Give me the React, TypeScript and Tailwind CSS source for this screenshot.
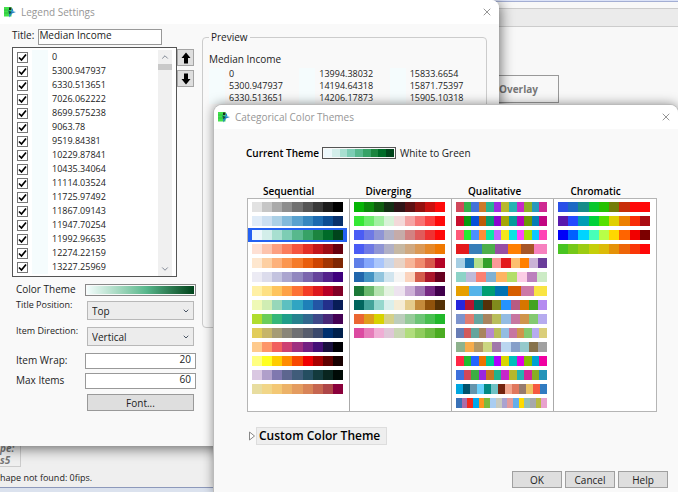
import { useState } from 'react';
import type { ReactNode } from 'react';
import { ChevronDown, ChevronUp, X } from 'lucide-react';

const legendItems = [
  '0', '5300.947937', '6330.513651', '7026.062222', '8699.575238', '9063.78',
  '9519.84381', '10229.87841', '10435.34064', '11114.03524', '11725.97492',
  '11867.09143', '11947.70254', '11992.96635', '12274.22159', '13227.25969',
];

const previewColumns = [
  ['0', '5300.947937', '6330.513651'],
  ['13994.38032', '14194.64318', '14206.17873'],
  ['15833.6654', '15871.75397', '15905.10318'],
];

const whiteToGreen = '#edf8fb #d3eeea #a8dfd0 #7dcdb4 #58b88d #37a266 #1c853f #006b28 #00441b';

const themeGroups = [
  {
    name: 'Sequential',
    themes: [
      '#e2e2e2 #c6c6c6 #aaaaaa #8e8e8e #717171 #555555 #393939 #1c1c1c #000000',
      '#e0ecf8 #cbdff1 #abd0e6 #82badb #59a1cf #3787c0 #1c6ab0 #0b4d94 #08306b',
      whiteToGreen,
      '#fee0d4 #fdc3ac #fc9f81 #fb7c5c #f5543f #e32f27 #c3161b #9e0d14 #67000d',
      '#fee7cf #fdcfa2 #fdb17b #fb9650 #f57b2a #e95e0d #cd4401 #a23503 #7f2704',
      '#ecebf4 #dcdcec #c3c3df #aaa5cf #9187bf #7b66ae #65439b #53218b #3f007d',
      '#fff0a5 #fee083 #fec45c #fea145 #fd7134 #f43c25 #dd181d #b60026 #800026',
      '#eff9b6 #d0edb3 #97d7b9 #5dc0c0 #30a5c2 #1e80b8 #2356a5 #232f8b #081d58',
      '#b0dd2f #6bcd5a #35b779 #1f9e89 #26828e #31688e #3e4989 #482878 #440154',
      '#e2cd5a #c6b569 #a69c75 #8a8678 #6f7073 #575d6d #3b496c #00306f #00204c',
      '#feca8d #fd9668 #f1605d #cd4071 #9e2f7f #721f81 #440f76 #180f3d #000004',
      '#ffff80 #ffff20 #ffcc00 #ff8c00 #f84800 #f00000 #a80000 #600000 #180000',
      '#dac8e2 #b09fca #8078af #5d668f #405c7a #254e61 #133a3d #09251f #000a05',
      '#e8dda0 #f1d688 #f3c875 #ecb268 #e49c60 #d88458 #c66650 #ae4648 #8a003b',
    ],
  },
  {
    name: 'Diverging',
    themes: [
      '#05b505 #0b8a0b #105c10 #152f15 #2f1518 #5e1013 #94100f #cb100f #ff0a0a',
      '#35e835 #6cec6c #a2f0a2 #d8f2d8 #f3d9d9 #f5a4a4 #f87272 #fc3f3f #ff0a0a',
      '#4a5cf5 #6e79e5 #8f95d5 #b0b0c6 #c5aba9 #d28282 #e05b5b #ef3131 #ff0808',
      '#4a5cf5 #6e79e5 #8f95d5 #b0b0c6 #c6b8a3 #d0a981 #db9956 #e58829 #f07800',
      '#5f7fe8 #84a6fb #aac6fb #ccd7e8 #e8d3c6 #f6b599 #ef8b6e #d8584a #b40426',
      '#2166ac #4493c3 #92c5de #d1e5ef #f6f5f4 #fbd3bd #d45c4b #ab162a #67001f',
      '#1b7837 #69b76b #b5e2af #e4f2e0 #ede3ef #cdb1d7 #a278b4 #762a83 #40004b',
      '#01665e #43a399 #96d7cd #daefec #f5ecd5 #e5cb8c #c48a3b #90520c #543005',
      '#eb6632 #e09c1c #d8d200 #d4d08a #bccdbc #96cb99 #6dc576 #48bf50 #20b82a',
      '#dc4aa1 #e67cba #f0aed5 #dfc7d8 #c9d7b4 #b1dd7d #90cc5e #6ebc43 #4bac22',
    ],
  },
  {
    name: 'Qualitative',
    themes: [
      '#d1495b #35b04a #4472d8 #cc7a29 #27b391 #9b2be0 #b8b82b #28b3b3 #c72ac7 #8eb127 #2899bd #cf2a92',
      '#c8102e #089b10 #0850d8 #bd5b08 #069b6e #8a06cf #a5a506 #069b9b #b506b5 #6c9806 #067eb5 #c10681',
      '#ff5978 #26ec30 #4b90ff #ff8e35 #0be8a5 #bd68ff #f4e71c #0be4e4 #fd47fb #a3e00b #0bc8ff #ff43b5',
      '#e41a1c #377eb8 #4daf4a #984ea3 #ff7f00 #a65628 #f781bf',
      '#a6cee3 #1f78b4 #b2df8a #33a02c #fb9a99 #e31a1c #fdbf6f #ff7f00 #cab2d6 #6a3d9a',
      '#8dd3c7 #bebada #fb8072 #80b1d3 #fdb462 #b3de69 #fccde5 #bc80bd #ccebc5',
      '#e69f00 #56b4e9 #009e73 #0072b2 #d55e00 #cc79a7 #f9e442',
      '#2626dc #b5132f #00665e #563009 #808b1c #2593ff #b75b83 #d67600 #44a321 #b58bf0',
      '#7c93cd #e07c70 #65a6a1 #a8845e #b9bd5b #93bce2 #c776a0 #cf954b #84c970 #b6abef',
      '#697db5 #d35a5b #64a49d #a8845e #b688cf #b9bd5b #93bce2 #c776a0 #cf954b #84c970 #b6abef #dace7a',
      '#8eb28d #f7ac4b #b29866 #cbd681 #a178aa #bad5ef #869fc9 #94c9cb #86724b #a1a1a1',
      '#ff2745 #20bd2f #2464ff #eb7400 #00ca91 #ab00ff #d9d500 #00bdbd #e100e1 #85bf00 #00a1d2 #f000a1',
      '#3d70dc #d24758 #3cae42 #9a25df #c57522 #22b28b #c725cb #b7b72b #25b3b0 #d12697 #88ae22 #2394b9',
      '#00a6df #00536d #6495ad #69d1fb #008a83 #70c1c4 #73230d #f1a58d #e0775d #967b6e #ecc363 #f65940 #317bc1',
      '#3a72b7 #ac6da9 #f22c21 #00a8ee #fb951e #79ba3d #a9cdf1 #c8cbbf #aaa3d0 #e49b9b #63aeea #ffdb00 #95c0b5 #a7a8ab #b8b942 #e9a2ce',
    ],
  },
  {
    name: 'Chromatic',
    themes: [
      '#294fe8 #1c69c4 #168c88 #08c72c #25c100 #737d08 #c82d08 #ff0808 #ff0808',
      '#5819ac #244aff #009cb5 #00d139 #55df00 #dfd000 #ec8100 #f92c07 #aa0c12',
      '#0000f8 #0060ff #00d4ff #48ffb8 #b8ff48 #ffd800 #ff6400 #f20000 #7c0000',
      '#48c421 #75c819 #9ccc12 #c5cf09 #dcbb08 #e59208 #ee6508 #fa3708 #ff0808',
    ],
  },
];

const AppIcon = () => (
  <svg viewBox="0 0 24 24" className="h-3 w-3 shrink-0" aria-hidden="true">
    <path d="M0 2h15v19H0z" fill="#42e04b" />
    <path d="M0 8h10M0 14h9" stroke="#25b53c" strokeWidth="1.5" />
    <path d="M10 3h5v5h-5z" fill="#12301a" />
    <path d="M9 9l15 3-8 3-5 8z" fill="#2384c4" />
    <path d="M9 9l6 3-2 3-3 1z" fill="#145a38" />
    <path d="M17 4l2 7-5-1z" fill="#1b8fc9" />
  </svg>
);

const TitleBar = ({ title }: { title: string }) => (
  <header className="flex h-6 shrink-0 items-center gap-1 bg-white pr-1.5 pl-1 text-[#969696]">
    <AppIcon />
    <h2 className="grow pl-px">{title}</h2>
    <button type="button" aria-label={`Close ${title}`}>
      <X className="h-3 w-3" strokeWidth={2} />
    </button>
  </header>
);

const ColorBar = ({ colors }: { colors: string }) => (
  <span className="flex h-full w-full">
    {colors.split(' ').map((color, index) => (
      <span key={index} className="grow" style={{ backgroundColor: color }} />
    ))}
  </span>
);

const PushButton = ({ children }: { children: ReactNode }) => (
  <button type="button" className="h-[17px] w-[50px] border border-[#a0a0a0] bg-[#dedede] leading-none">
    {children}
  </button>
);

const Dropdown = ({ id, options }: { id: string; options: string[] }) => (
  <div className="mx-0.5 grid grow items-center">
    <select
      id={id}
      className="col-start-1 row-start-1 h-[19px] w-full appearance-none border border-[#b8b8b8] bg-[#ececec] pl-1"
    >
      {options.map((option) => (
        <option key={option}>{option}</option>
      ))}
    </select>
    <ChevronDown className="pointer-events-none col-start-1 row-start-1 mr-1 h-2 w-2 justify-self-end text-gray-600" strokeWidth={3} />
  </div>
);

const MoveArrow = ({ down }: { down?: boolean }) => (
  <button
    type="button"
    aria-label={down ? 'Move down' : 'Move up'}
    className="flex h-[17px] w-[17px] items-center justify-center border border-[#a5a5a5] bg-[#dedede]"
  >
    <svg viewBox="0 0 10 12" className={down ? 'h-3 w-2.5 rotate-180' : 'h-3 w-2.5'}>
      <path d="M5 0.5L9.5 6H7v5.5H3V6H0.5z" fill="#000" />
    </svg>
  </button>
);

const LegendSettings = () => (
  <section className="absolute top-0 left-0 flex h-[446px] w-[499px] flex-col overflow-hidden rounded-tr-lg bg-[#f9f9f9] shadow-[1px_2px_14px_#00000099]">
    <TitleBar title="Legend Settings" />
    <div className="flex grow gap-1.5 pr-3 pl-3">
      <div className="w-[184px] shrink-0">
        <div className="mt-1 flex h-[19px] items-start gap-1">
          <label htmlFor="title">Title:</label>
          <input id="title" defaultValue="Median Income" className="mt-px h-4 w-[124px] border border-[#999] bg-white pb-1" />
        </div>

        <div className="flex items-start">
          <div className="flex h-[230px] w-[165px] justify-between border border-[#555] bg-white pt-0.5 pr-1 pl-1">
            <ul>
              {legendItems.map((item) => (
                <li key={item}>
                  <label className="flex h-3.5 items-center">
                    <span className="grid">
                      <input
                        type="checkbox"
                        defaultChecked
                        className="peer col-start-1 row-start-1 h-[11px] w-[11px] appearance-none border border-[#777] bg-white"
                      />
                      <svg viewBox="0 0 11 11" className="pointer-events-none invisible col-start-1 row-start-1 h-[11px] w-[11px] peer-checked:visible">
                        <path d="M2 5.5L4.5 8L9 2.5" fill="none" stroke="#000" strokeWidth="1.7" />
                      </svg>
                    </span>
                    <span className="ml-1 h-3.5 w-4 bg-[#f5fcfd]" />
                    <span className="ml-1 text-[9px]">{item}</span>
                  </label>
                </li>
              ))}
            </ul>
            <div className="flex w-3.5 flex-col items-center bg-[#f0f0f0] text-gray-500">
              <ChevronUp className="my-0.5 h-2.5 w-2.5" />
              <div className="h-1.5 w-full bg-[#c9c9c9]" />
              <ChevronDown className="mt-auto mb-0.5 h-2.5 w-2.5" />
            </div>
          </div>
          <div className="mt-0.5 flex flex-col gap-1">
            <MoveArrow />
            <MoveArrow down />
          </div>
        </div>

        <div className="mt-[5px] flex flex-col pl-1">
          <div className="flex h-4 items-start">
            <span className="w-[69px] shrink-0">Color Theme</span>
            <button type="button" aria-label="Color theme" className="mt-0.5 h-3 grow border border-[#888] p-px">
              <span className="block h-full bg-linear-to-r from-[#f3fcfc] via-[#58b88d] via-55% to-[#00441b]" />
            </button>
          </div>
          <div className="mb-1 flex h-[22px] items-end">
            <label htmlFor="position" className="w-[69px] shrink-0 self-start text-[9px] whitespace-nowrap">Title Position:</label>
            <Dropdown id="position" options={['Top', 'Bottom', 'Left', 'Right']} />
          </div>
          <div className="flex h-[22px] items-end">
            <label htmlFor="direction" className="w-[69px] shrink-0 self-start text-[9px] whitespace-nowrap">Item Direction:</label>
            <Dropdown id="direction" options={['Vertical', 'Horizontal']} />
          </div>
          <div className="mt-[7px] flex h-5 items-start">
            <label htmlFor="wrap" className="w-[69px] shrink-0">Item Wrap:</label>
            <input id="wrap" defaultValue="20" className="h-4 w-0 grow border border-[#999] bg-white px-1 pb-1 text-right" />
          </div>
          <div className="flex h-5 items-start">
            <label htmlFor="max" className="w-[69px] shrink-0">Max Items</label>
            <input id="max" defaultValue="60" className="h-4 w-0 grow border border-[#999] bg-white px-1 pb-1 text-right" />
          </div>
          <button type="button" className="mt-px mr-0.5 ml-[71px] h-[17px] border border-[#999] bg-[#dedede] leading-none">
            Font...
          </button>
        </div>
      </div>

      <fieldset className="mt-1.5 h-[298px] min-w-0 grow rounded-sm border border-[#ccc] px-1.5">
        <legend className="px-0.5">Preview</legend>
        <p className="mt-2">Median Income</p>
        <div className="mt-0.5 grid grid-cols-3">
          {previewColumns.map((column) => (
            <ul key={column[0]}>
              {column.map((value) => (
                <li key={value} className="flex h-3 items-center gap-1 text-[9px]">
                  <span className="h-full w-4 bg-[#f5fcfd]" />
                  {value}
                </li>
              ))}
            </ul>
          ))}
        </div>
      </fieldset>
    </div>
  </section>
);

const ColorThemes = () => {
  const [selected, setSelected] = useState(whiteToGreen);

  return (
    <section className="absolute top-[105px] right-0 bottom-0 left-[214px] flex flex-col overflow-hidden rounded-t-lg bg-[#f9f9f9] shadow-[0_0_0_1px_#bbb,0_0_12px_#00000080]">
      <TitleBar title="Categorical Color Themes" />
      <div className="flex grow flex-col pr-2.5 pb-1 pl-8">
        <div className="mt-4 flex h-4 items-center">
          <h3 className="w-[76px] font-semibold whitespace-nowrap text-black">Current Theme</h3>
          <span className="mr-1 h-3 w-[74px] border border-[#555] p-px">
            <ColorBar colors={selected} />
          </span>
          <span>White to Green</span>
        </div>

        <div className="mt-[23px] ml-px grid w-[410px] grid-cols-4">
          {themeGroups.map((group) => (
            <h3 key={group.name} className="h-3.5 pl-4 font-semibold text-black">{group.name}</h3>
          ))}
        </div>
        <div className="ml-px grid h-[214px] w-[410px] grid-cols-4 divide-x divide-[#aaa] border border-[#b5b5b5] bg-white">
          {themeGroups.map((group) => (
            <div key={group.name} className="flex flex-col pt-px pr-0.5">
              {group.themes.map((colors, index) => (
                <button
                  key={index}
                  type="button"
                  aria-label={`${group.name} theme ${index + 1}`}
                  onClick={() => setSelected(colors)}
                  className={
                    colors === selected
                      ? 'h-3.5 border-2 border-[#2461f2] bg-[#2461f2] px-0.5'
                      : 'h-3.5 border-2 border-transparent px-0.5'
                  }
                >
                  <ColorBar colors={colors} />
                </button>
              ))}
            </div>
          ))}
        </div>

        <div className="mt-[15px] flex items-center pl-0.5">
          <svg viewBox="0 0 6 10" className="h-2.5 w-2" aria-hidden="true">
            <path d="M0.5 1v8l5-4z" fill="#fff" stroke="#888" />
          </svg>
          <button type="button" className="h-[18px] w-[131px] border border-[#ddd] bg-[#eee] pl-0.5 text-left text-[12px] leading-none font-semibold whitespace-nowrap text-black">
            Custom Color Theme
          </button>
        </div>

        <div className="mt-auto flex justify-end gap-[3px]">
          <PushButton>OK</PushButton>
          <PushButton>Cancel</PushButton>
          <PushButton>Help</PushButton>
        </div>
      </div>
    </section>
  );
};

const App = () => (
  <main className="relative flex h-screen flex-col overflow-hidden bg-[#f8f8f8] font-['Open_Sans',sans-serif] text-[10px] leading-[14px] text-[#222]">
    <div className="h-0.5 shrink-0 border-b border-[#a3aed3] bg-[#dce3f8]" />
    <div className="mt-1.5 h-[19px] shrink-0 border-y border-[#ccc] bg-[#ebebeb]" />
    <div className="mt-12 pl-[478px]">
      <button type="button" className="h-7 w-[81px] border border-[#999] font-bold text-[#777]">Overlay</button>
    </div>

    <footer className="mt-auto bg-[#efefef]">
      <div className="flex h-9 w-[21px] flex-col justify-end border border-l-0 border-[#ccc] font-bold text-[#777] italic">
        <p className="leading-3">pe:</p>
        <p className="leading-3">s5</p>
      </div>
      <p className="mt-1 h-4 text-[9px]">hape not found: 0fips.</p>
      <div className="h-[5px] border-t border-[#8d99bb] bg-[#dbe2ee]" />
    </footer>

    <LegendSettings />
    <ColorThemes />
  </main>
);

export default App;
